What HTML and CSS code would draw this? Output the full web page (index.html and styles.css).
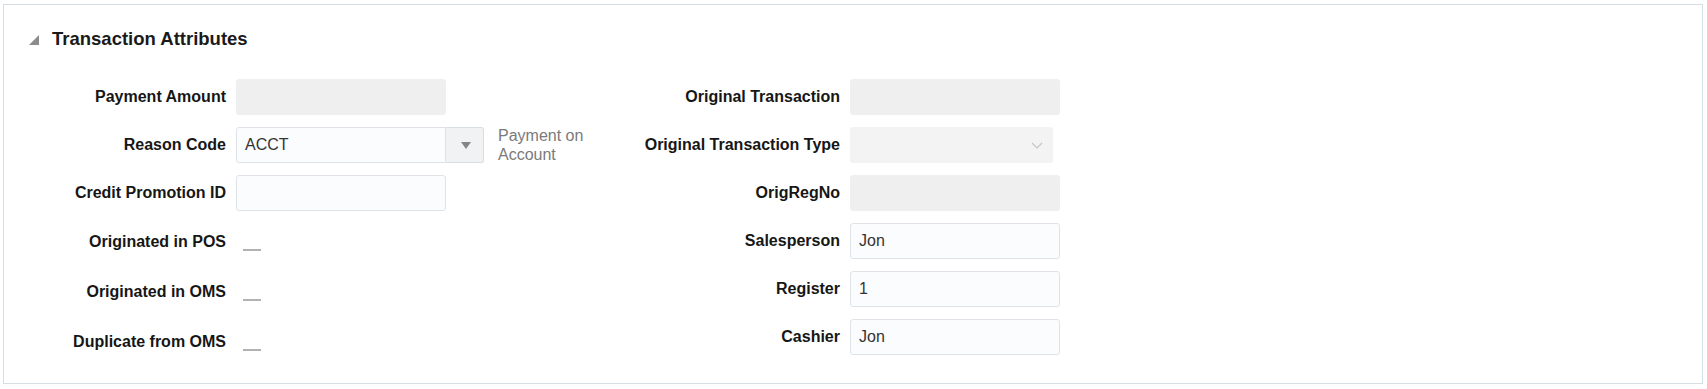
FILE: index.html
```html
<!DOCTYPE html>
<html>
<head>
    <meta charset="UTF-8">
    <meta name="viewport" content="width=device-width, initial-scale=1.0">
    <title>Transaction Attributes</title>
    <link rel="stylesheet" href="styles.css">
</head>
<body>
    <div class="panel">
        <div class="panel-header">
            <span class="toggle"></span>
            <h2>Transaction Attributes</h2>
        </div>
        <div class="form">
            <div class="col col-left">
                <div class="row">
                    <label>Payment Amount</label>
                    <div class="field readonly"></div>
                </div>
                <div class="row">
                    <label>Reason Code</label>
                    <div class="combo">
                        <div class="field editable">ACCT</div>
                        <div class="combo-btn"><span class="caret"></span></div>
                    </div>
                    <div class="note">Payment on Account</div>
                </div>
                <div class="row">
                    <label>Credit Promotion ID</label>
                    <div class="field editable"></div>
                </div>
                <div class="row check">
                    <label>Originated in POS</label>
                    <span class="dash"></span>
                </div>
                <div class="row check">
                    <label>Originated in OMS</label>
                    <span class="dash"></span>
                </div>
                <div class="row check">
                    <label>Duplicate from OMS</label>
                    <span class="dash"></span>
                </div>
            </div>
            <div class="col col-right">
                <div class="row">
                    <label>Original Transaction</label>
                    <div class="field readonly"></div>
                </div>
                <div class="row">
                    <label>Original Transaction Type</label>
                    <div class="field select-disabled">
                        <svg class="chevron" width="12" height="7" viewBox="0 0 12 7"><path d="M1 1 L6 6 L11 1" fill="none" stroke="#c4c4c4" stroke-width="1.2"/></svg>
                    </div>
                </div>
                <div class="row">
                    <label>OrigRegNo</label>
                    <div class="field readonly"></div>
                </div>
                <div class="row">
                    <label>Salesperson</label>
                    <div class="field editable">Jon</div>
                </div>
                <div class="row">
                    <label>Register</label>
                    <div class="field editable">1</div>
                </div>
                <div class="row">
                    <label>Cashier</label>
                    <div class="field editable">Jon</div>
                </div>
            </div>
        </div>
    </div>
</body>
</html>
```

FILE: styles.css
```css
body {
    margin: 0;
    font-family: 'Liberation Sans', Arial, sans-serif;
    background: #ffffff;
    color: #161616;
}
.panel {
    margin: 4px 4px 0 3px;
    height: 378px;
    border: 1px solid #d6dde3;
    box-sizing: content-box;
}
.panel-header {
    display: flex;
    align-items: center;
    padding: 23px 0 0 25px;
    height: 22px;
}
.toggle {
    width: 0;
    height: 0;
    border-left: 10px solid transparent;
    border-bottom: 10px solid #8c8c8c;
    margin-right: 13px;
    margin-top: 2px;
}
h2 {
    margin: 0;
    font-size: 18.5px;
    font-weight: bold;
    color: #1a1a1a;
    line-height: 22px;
}
.form {
    display: flex;
    padding: 29px 0 0 22px;
}
.col-left {
    width: 584px;
}
.row {
    display: flex;
    align-items: center;
    height: 36px;
    margin-bottom: 12px;
}
.row.check {
    height: 38px;
    align-items: flex-start;
}
label {
    width: 200px;
    margin-right: 10px;
    text-align: right;
    font-size: 16px;
    font-weight: bold;
    line-height: 36px;
}
.row.check label {
    line-height: 38px;
}
.col-right label {
    width: 230px;
}
.field {
    width: 210px;
    height: 36px;
    box-sizing: border-box;
    border-radius: 3px;
    font-size: 16px;
    color: #333333;
    line-height: 34px;
    padding-left: 8px;
    border: 1px solid transparent;
}
.readonly {
    background: #efeff0;
}
.editable {
    background: #fbfcfd;
    border-color: #dfe3e7;
}
.select-disabled {
    width: 203px;
    background: #f3f3f3;
    display: flex;
    justify-content: flex-end;
    align-items: center;
    padding-right: 9px;
}
.combo {
    display: flex;
}
.combo .field {
    border-radius: 3px 0 0 3px;
}
.combo-btn {
    width: 38px;
    height: 36px;
    box-sizing: border-box;
    background: #f0f2f4;
    border: 1px solid #d8dde2;
    border-left: none;
    border-radius: 0 3px 3px 0;
    display: flex;
    justify-content: center;
    align-items: center;
}
.caret {
    width: 0;
    height: 0;
    border-left: 5px solid transparent;
    border-right: 5px solid transparent;
    border-top: 7px solid #858585;
    margin-left: 2px;
}
.note {
    width: 100px;
    margin-left: 14px;
    font-size: 16px;
    line-height: 19px;
    color: #7a7a7a;
}
.dash {
    width: 18px;
    margin-top: 26px;
    margin-left: 7px;
    border-bottom: 2px solid #b2b2b2;
}
```
